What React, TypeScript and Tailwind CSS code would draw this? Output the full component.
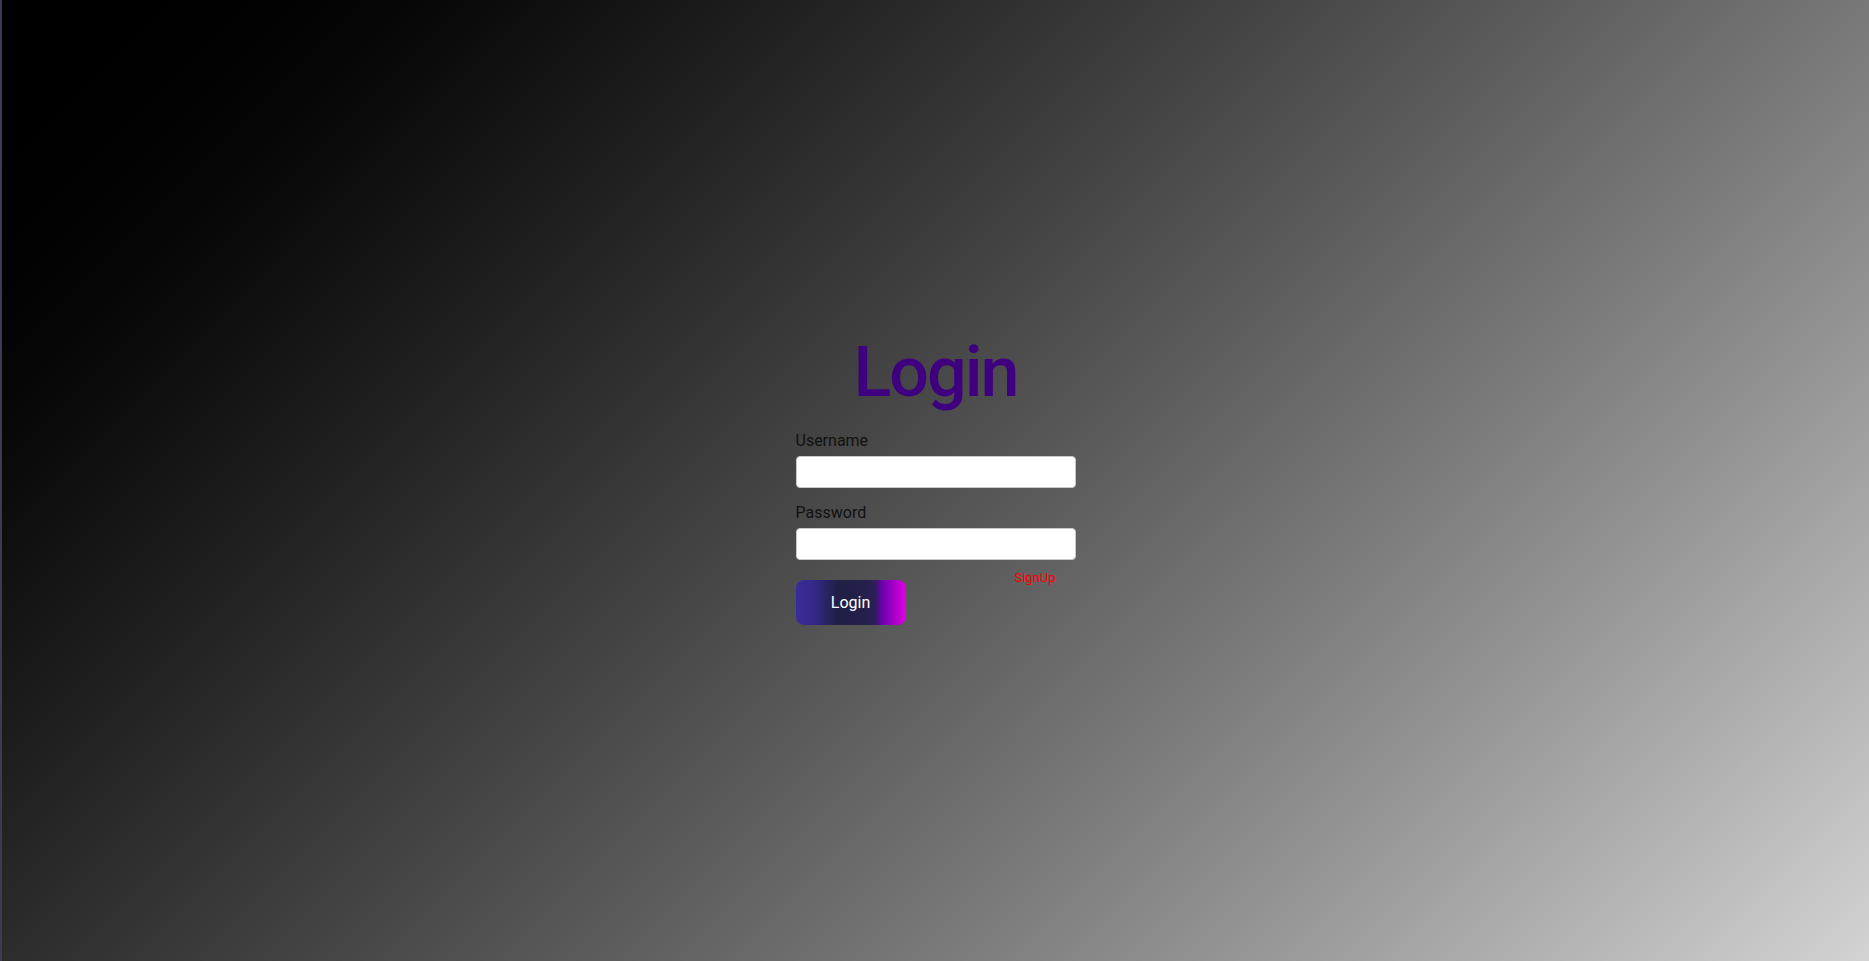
import React, { useState } from "react";

export default function App() {
  const [username, setUsername] = useState("");
  const [password, setPassword] = useState("");

  return (
    <div
      className="min-h-screen flex items-center justify-center border-l-2 border-[#3b3a58] bg-linear-135 from-black to-[#d3d3d3]"
      style={{ fontFamily: "Roboto, 'Noto Sans', sans-serif" }}
    >
      <form className="w-[280px] flex flex-col" onSubmit={(e) => e.preventDefault()}>
        <h1 className="text-center text-[70px] leading-[72px] font-medium tracking-[-2px] text-[#3f007f]">Login</h1>

        <label className="mt-[21px] block text-base leading-6 text-[#111]">Username</label>
        <input
          type="text"
          value={username}
          onChange={(e) => setUsername(e.target.value)}
          className="mt-[3px] h-8 w-full rounded-[4px] border border-[#c8c8c8] bg-white px-2 outline-none"
        />

        <label className="mt-[13px] block text-base leading-6 text-[#111]">Password</label>
        <input
          type="password"
          value={password}
          onChange={(e) => setPassword(e.target.value)}
          className="mt-[3px] h-8 w-full rounded-[4px] border border-[#c8c8c8] bg-white px-2 outline-none"
        />

        <div className="flex items-start justify-between">
          <button
            type="submit"
            className="mt-5 w-[110px] h-[45px] rounded-lg text-white text-base bg-[linear-gradient(90deg,#3a2c98_0%,#33298a_16%,#201f44_38%,#23204a_60%,#2c1f58_72%,#6a00ad_78%,#e000e0_100%)]"
          >
            Login
          </button>
          <a href="#" className="mt-2 mr-5 text-[13px] leading-5 text-[#ff0000]">
            SignUp
          </a>
        </div>
      </form>
    </div>
  );
}
